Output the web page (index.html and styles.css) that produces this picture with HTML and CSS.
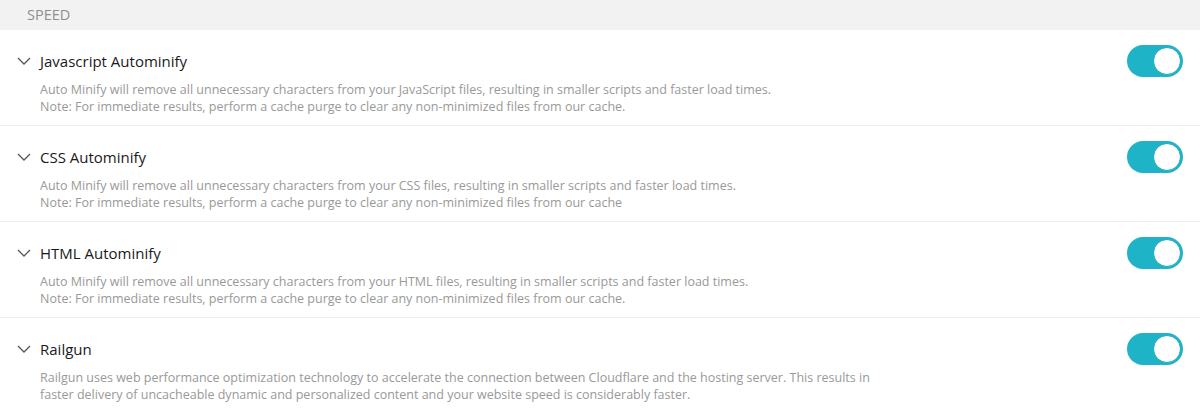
FILE: index.html
```html
<!DOCTYPE html>
<html lang="en">
<head>
    <meta charset="UTF-8">
    <meta name="viewport" content="width=device-width, initial-scale=1.0">
    <title>Speed settings</title>
    <link rel="stylesheet" href="styles.css">
</head>
<body>
    <div class="section-head">SPEED</div>

    <div class="setting">
        <div class="setting-top">
            <svg class="chevron" width="14" height="8" viewBox="0 0 14 8"><path d="M1 1l6 6 6-6" fill="none" stroke="#555" stroke-width="1.3"/></svg>
            <span class="title">Javascript Autominify</span>
            <span class="toggle on"><span class="knob"></span></span>
        </div>
        <p class="desc">Auto Minify will remove all unnecessary characters from your JavaScript files, resulting in smaller scripts and faster load times.<br>Note: For immediate results, perform a cache purge to clear any non-minimized files from our cache.</p>
    </div>

    <div class="setting">
        <div class="setting-top">
            <svg class="chevron" width="14" height="8" viewBox="0 0 14 8"><path d="M1 1l6 6 6-6" fill="none" stroke="#555" stroke-width="1.3"/></svg>
            <span class="title">CSS Autominify</span>
            <span class="toggle on"><span class="knob"></span></span>
        </div>
        <p class="desc">Auto Minify will remove all unnecessary characters from your CSS files, resulting in smaller scripts and faster load times.<br>Note: For immediate results, perform a cache purge to clear any non-minimized files from our cache</p>
    </div>

    <div class="setting">
        <div class="setting-top">
            <svg class="chevron" width="14" height="8" viewBox="0 0 14 8"><path d="M1 1l6 6 6-6" fill="none" stroke="#555" stroke-width="1.3"/></svg>
            <span class="title">HTML Autominify</span>
            <span class="toggle on"><span class="knob"></span></span>
        </div>
        <p class="desc">Auto Minify will remove all unnecessary characters from your HTML files, resulting in smaller scripts and faster load times.<br>Note: For immediate results, perform a cache purge to clear any non-minimized files from our cache.</p>
    </div>

    <div class="setting">
        <div class="setting-top">
            <svg class="chevron" width="14" height="8" viewBox="0 0 14 8"><path d="M1 1l6 6 6-6" fill="none" stroke="#555" stroke-width="1.3"/></svg>
            <span class="title">Railgun</span>
            <span class="toggle on"><span class="knob"></span></span>
        </div>
        <p class="desc">Railgun uses web performance optimization technology to accelerate the connection between Cloudflare and the hosting server. This results in<br>faster delivery of uncacheable dynamic and personalized content and your website speed is considerably faster.</p>
    </div>
</body>
</html>
```

FILE: styles.css
```css
body {
    margin: 0;
    font-family: "Open Sans", Arial, sans-serif;
    background: white;
    color: #1a1a1a;
}
.section-head {
    height: 30px;
    line-height: 30px;
    padding-left: 27px;
    background: #f2f2f2;
    color: #8f8f8f;
    font-size: 14.5px;
}
.setting {
    padding: 20px 17px 10px 17px;
    border-bottom: 1px solid #f0f0f0;
}
.setting-top {
    display: flex;
    align-items: center;
    height: 22px;
}
.chevron {
    margin-right: 9px;
}
.title {
    font-size: 15px;
    flex: 1;
}
.toggle {
    width: 56px;
    height: 32px;
    border-radius: 16px;
    background: #1fb3c8;
    display: flex;
    align-items: center;
    justify-content: flex-end;
    box-sizing: border-box;
    padding: 2px;
}
.knob {
    width: 28px;
    height: 28px;
    box-sizing: border-box;
    border: 1px solid #1aa9bd;
    border-radius: 50%;
    background: white;
}
.desc {
    margin: 9px 0 0 23px;
    font-size: 12.5px;
    line-height: 17px;
    color: #999;
}
```
